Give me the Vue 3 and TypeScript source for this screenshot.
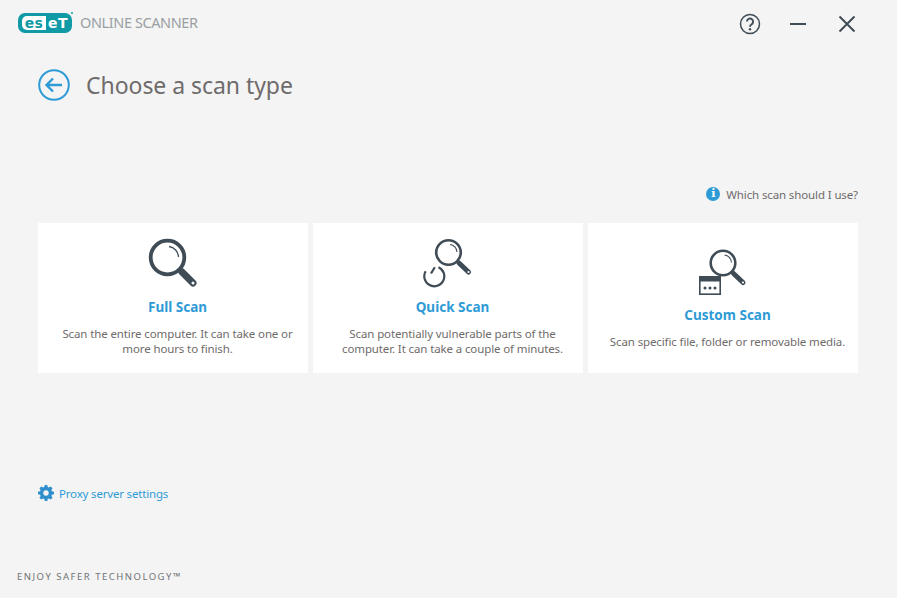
<script setup lang="ts">
interface Scan {
  title: string
  desc: string
  kind: 'full' | 'quick' | 'custom'
}
const scans: Scan[] = [
  { title: 'Full Scan', desc: 'Scan the entire computer. It can take one or more hours to finish.', kind: 'full' },
  { title: 'Quick Scan', desc: 'Scan potentially vulnerable parts of the computer. It can take a couple of minutes.', kind: 'quick' },
  { title: 'Custom Scan', desc: 'Scan specific file, folder or removable media.', kind: 'custom' },
]
</script>

<template>
  <div class="page">
    <header class="top">
      <div class="brand">
        <span class="logo"><span class="logo-es">es</span><span class="logo-et">eT</span></span>
        <span class="product">ONLINE SCANNER</span>
      </div>
      <div class="controls">
        <svg class="ctl ctl-help" width="24" height="24" viewBox="0 0 24 24" fill="none" stroke="#3f4c56">
          <circle cx="12" cy="12" r="9.500" stroke-width="1.500" />
          <path d="M8.900 9.600a3.100 3.100 0 1 1 4.800 2.600c-1.100.7-1.700 1.200-1.700 2.600" stroke-width="1.900" />
          <circle cx="12" cy="17.300" r="1.200" fill="#3f4c56" stroke="none" />
        </svg>
        <svg class="ctl" width="24" height="24" viewBox="0 0 24 24" stroke="#3f4c56">
          <path d="M4 12h16" stroke-width="2" />
        </svg>
        <svg class="ctl" width="24" height="24" viewBox="0 0 24 24" stroke="#3f4c56" fill="none">
          <path d="M4.500 4.500l15 15M19.500 4.500l-15 15" stroke-width="2" />
        </svg>
      </div>
    </header>

    <div class="heading">
      <svg width="32" height="32" viewBox="0 0 32 32" fill="none" stroke="#2e9bd6">
        <circle cx="16" cy="16" r="14.800" stroke-width="2" />
        <path d="M24 16H9M15 9.500L8.500 16l6.500 6.500" stroke-width="2.400" />
      </svg>
      <h1>Choose a scan type</h1>
    </div>

    <div class="help">
      <span class="info"><span class="info-i">i</span></span>
      <span>Which scan should I use?</span>
    </div>

    <section class="cards">
      <article v-for="s in scans" :key="s.kind" class="card" :class="'card-' + s.kind">
        <svg v-if="s.kind === 'full'" class="icon" width="50" height="50" viewBox="0 0 50 50" fill="none">
          <circle cx="19.500" cy="19.500" r="16.800" stroke="#3f4c56" stroke-width="3.800" />
          <path d="M21 8.500a11 11 0 0 1 9.500 10.500" stroke="#3f4c56" stroke-width="1.300" />
          <path d="M34 34l11 11" stroke="#3f4c56" stroke-width="7" stroke-linecap="round" />
          <circle cx="45" cy="45" r="1.500" fill="#fff" />
        </svg>
        <svg v-else-if="s.kind === 'quick'" class="icon" width="50" height="50" viewBox="0 0 50 50" fill="none">
          <circle cx="25.500" cy="14.500" r="12.300" stroke="#3f4c56" stroke-width="2.600" />
          <path d="M27 6.500a8 8 0 0 1 7 7.500" stroke="#3f4c56" stroke-width="1.100" />
          <path d="M36 25l9.500 9" stroke="#3f4c56" stroke-width="5" stroke-linecap="round" />
          <circle cx="45.500" cy="34" r="1.100" fill="#fff" />
          <path d="M15.500 29.200A10 10 0 1 1 2.600 33.300" stroke="#3f4c56" stroke-width="2.200" />
          <path d="M8 35.500l3.800-6.300" stroke="#3f4c56" stroke-width="2.200" />
        </svg>
        <svg v-else class="icon" width="50" height="50" viewBox="0 0 50 50" fill="none">
          <circle cx="25" cy="15" r="12.300" stroke="#3f4c56" stroke-width="2.600" />
          <path d="M26.500 7a8 8 0 0 1 7 7.500" stroke="#3f4c56" stroke-width="1.100" />
          <path d="M35.500 25.500l9.500 9" stroke="#3f4c56" stroke-width="5" stroke-linecap="round" />
          <circle cx="45" cy="34.500" r="1.100" fill="#fff" />
          <rect x="1.800" y="28.800" width="20.400" height="17.400" fill="#fff" stroke="#3f4c56" stroke-width="1.600" />
          <rect x="1" y="28" width="22" height="5.500" fill="#3f4c56" />
          <circle cx="7" cy="40" r="1.500" fill="#3f4c56" />
          <circle cx="12" cy="40" r="1.500" fill="#3f4c56" />
          <circle cx="17" cy="40" r="1.500" fill="#3f4c56" />
        </svg>
        <h2>{{ s.title }}</h2>
        <p>{{ s.desc }}</p>
      </article>
    </section>

    <div class="spacer"></div>

    <div class="proxy">
      <svg width="16" height="16" viewBox="0 0 16 16">
        <path fill="#2e8fcc" fill-rule="evenodd" d="M6.700 0h2.600l.4 2.100 1.200.5 1.800-1.200 1.900 1.900-1.200 1.800.5 1.200 2.100.4v2.600l-2.100.4-.5 1.200 1.200 1.800-1.900 1.900-1.800-1.200-1.200.5-.4 2.100H6.700l-.4-2.100-1.200-.5-1.800 1.200-1.900-1.900 1.200-1.800-.5-1.200L0 9.300V6.700l2.100-.4.5-1.200-1.200-1.800 1.900-1.900 1.800 1.200 1.200-.5zM8 5.300a2.700 2.700 0 1 0 0 5.400 2.700 2.700 0 0 0 0-5.400z" />
      </svg>
      <span>Proxy server settings</span>
    </div>

    <footer class="foot">ENJOY SAFER TECHNOLOGY™</footer>
  </div>
</template>

<style>
html, body { margin: 0; background: #f4f4f4; }
</style>

<style scoped>
.page {
  width: 897px;
  height: 598px;
  box-sizing: border-box;
  display: flex;
  flex-direction: column;
  overflow: hidden;
  background: #f4f4f4;
  font-family: "Noto Sans", "Open Sans", sans-serif;
  color: #6f6b6b;
}
.top {
  display: flex;
  align-items: center;
  justify-content: space-between;
  height: 24px;
  padding: 11px 38px 0 18px;
}
.brand { display: flex; align-items: center; gap: 8px; }
.logo {
  position: relative;
  display: inline-flex;
  align-items: center;
  box-sizing: border-box;
  width: 54px;
  height: 20px;
  padding: 3px 2px 3px 4px;
  border-radius: 7px;
  background: #0f9aa5;
  font-family: "DejaVu Sans", sans-serif;
  font-weight: 700;
  font-size: 14px;
  line-height: 14px;
  letter-spacing: 0.4px;
}
.logo::after {
  content: "";
  position: absolute;
  top: -1px;
  right: -1px;
  width: 2px;
  height: 2px;
  border-radius: 50%;
  background: #0f9aa5;
}
.logo-es {
  width: 24px;
  height: 14px;
  border-radius: 5px 0 0 5px;
  background: #fff;
  color: #0f9aa5;
  text-align: center;
}
.logo-et { width: 24px; color: #fff; text-align: center; }
.product {
  font-size: 14.500px;
  line-height: 20px;
  letter-spacing: -0.400px;
  color: #9a9fa3;
  position: relative;
  top: -1px;
}
.controls { display: flex; gap: 25px; padding-top: 1px; }
.ctl { display: block; }
.ctl-help { margin-right: -1px; }
.heading {
  display: flex;
  align-items: center;
  gap: 16px;
  margin: 34px 0 0 38px;
  height: 32px;
}
.heading h1 {
  margin: 0;
  font-size: 23px;
  font-weight: 400;
  line-height: 32px;
  letter-spacing: -0.050px;
  color: #6f6b6b;
}
.help {
  display: flex;
  align-items: center;
  justify-content: flex-end;
  gap: 6px;
  height: 18px;
  margin: 84px 39px 0 0;
  font-size: 11.500px;
  letter-spacing: -0.120px;
}
.info {
  display: inline-flex;
  align-items: center;
  justify-content: center;
  width: 14px;
  height: 14px;
  border-radius: 50%;
  background: #2e9bd6;
}
.info-i {
  color: #fff;
  font: 700 11px/14px "DejaVu Serif", serif;
}
.cards {
  display: grid;
  grid-template-columns: repeat(3, 270px);
  gap: 5px;
  margin: 20px 0 0 38px;
}
.card {
  height: 150px;
  box-sizing: border-box;
  background: #fff;
  display: flex;
  flex-direction: column;
  align-items: center;
  padding: 15px 12px 0 21px;
  text-align: center;
}
.card-custom { padding-top: 25px; }
.icon { display: block; margin-left: -9px; }
.card h2 {
  margin: 10px 0 0;
  font-size: 13.500px;
  line-height: 18px;
  font-weight: 700;
  color: #2e9bd6;
}
.card-custom h2 { margin-top: 8px; }
.card p {
  margin: 10px 0 0;
  font-size: 11.500px;
  line-height: 15px;
  letter-spacing: -0.120px;
  color: #6f6b6b;
}
.spacer { flex: 1; }
.proxy {
  display: flex;
  align-items: center;
  gap: 5px;
  margin-left: 38px;
  height: 18px;
  font-size: 11.500px;
  letter-spacing: -0.180px;
  color: #2e9bd6;
}
.foot {
  margin: 69px 0 15px 17px;
  font-size: 9.500px;
  line-height: 12px;
  letter-spacing: 1.500px;
  color: #6f7376;
}
</style>
